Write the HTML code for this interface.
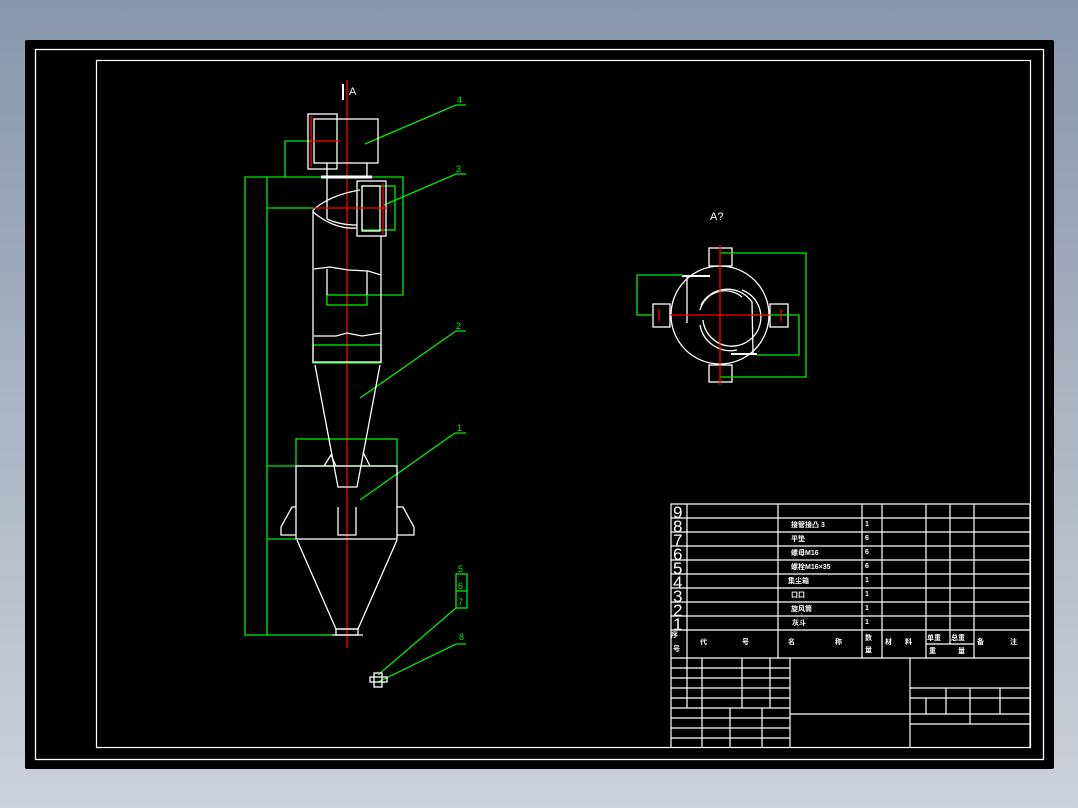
<!DOCTYPE html>
<html><head><meta charset="utf-8"><style>
html,body{margin:0;padding:0;width:1078px;height:808px;overflow:hidden;background:linear-gradient(#8797ac,#cdd1da);}
svg{position:absolute;left:0;top:0}
text{font-family:"Liberation Sans","Noto Sans CJK SC",sans-serif;}
</style></head><body>
<svg width="1078" height="808" viewBox="0 0 1078 808">
<rect x="25" y="40" width="1029" height="729" fill="#000" rx="2"/>
<rect x="35.5" y="49.5" width="1008" height="710" fill="none" stroke="#fff" stroke-width="1.3"/>
<rect x="96.5" y="60.5" width="934" height="687" fill="none" stroke="#fff" stroke-width="1.2"/>

<g fill="none" stroke-width="1.3">
<line x1="347" y1="80" x2="347" y2="648" stroke="#f00"/>
<g stroke="#0e0">
<polyline points="245,636 245,177 403,177 403,295 368,295"/>
<line x1="267" y1="177" x2="267" y2="636"/>
<polyline points="285,177 285,141 311,141"/>
<line x1="267" y1="208" x2="313" y2="208"/>
<rect x="362" y="186" width="33" height="44"/>
<rect x="327" y="295" width="40" height="10"/>
<rect x="313" y="345" width="68" height="18"/>
<rect x="296" y="439" width="101" height="27"/>
<line x1="267" y1="466" x2="296" y2="466"/>
<line x1="267" y1="539" x2="296" y2="539"/>
<line x1="245" y1="635" x2="332" y2="635"/>
<polyline points="365,144 456,105 466,105"/>
<polyline points="384,205 456,174 466,174"/>
<polyline points="360,398 456,331 466,331"/>
<polyline points="360,500 455,433 466,433"/>
<rect x="456" y="574" width="11" height="34"/>
<line x1="456" y1="591" x2="467" y2="591"/>
<polyline points="378,675 456,608"/>
<polyline points="378,682 456,644 466,644"/>
</g>
<g stroke="#fff">
<rect x="314" y="119" width="64" height="44"/>
<rect x="308" y="114" width="29" height="55"/>
<line x1="327" y1="163" x2="327" y2="177"/><line x1="367" y1="163" x2="367" y2="177"/>
<line x1="321" y1="177" x2="372" y2="177" stroke-width="3"/>
<polyline points="327,177 327,219"/>
<polyline points="313,210 313,362 381,362 381,236"/>
<path d="M313,210 Q330,195 360,190 M313,212 Q335,230 357,228 M327,219 Q340,225 357,225"/>
<rect x="357" y="181" width="29" height="55"/>
<rect x="362" y="186" width="18" height="45"/>
<path d="M314,269 L330,267 L348,270 L368,271 L381,275"/>
<line x1="327" y1="269" x2="327" y2="295"/><line x1="367" y1="271" x2="367" y2="295"/>
<path d="M314,336 L336,336 L347,333 L362,336 L381,333"/>
<polyline points="315,365 338,487 357,487 380,365"/>
<polyline points="324,466 331,455 336,466"/><polyline points="363,452 370,466"/>
<rect x="296" y="466" width="101" height="73"/>
<polyline points="296,507 292,507 281,527 281,535 296,535"/>
<polyline points="397,507 403,507 414,527 414,535 397,535"/>
<polyline points="338,507 338,535 356,535 356,507"/>
<polyline points="297,540 336,629 358,629 397,540"/>
<rect x="336" y="629" width="22" height="6"/>
<line x1="332" y1="635" x2="363" y2="635"/>
<rect x="370" y="677" width="17" height="5"/><rect x="374" y="673" width="8" height="14"/>
<line x1="343" y1="84" x2="343" y2="100" stroke-width="2"/>
</g>
<g stroke="#f00">
<line x1="313" y1="208" x2="388" y2="208"/>
<line x1="311" y1="141" x2="340" y2="141"/>
<line x1="311" y1="116" x2="311" y2="167"/>
<line x1="383" y1="183" x2="383" y2="234"/>
</g>
</g>
<g fill="#fff" font-size="11">
<text x="349" y="95">A</text>
</g>
<g fill="#0e0" font-size="9">
<text x="457" y="103">4</text><text x="456" y="172">3</text><text x="456" y="329">2</text><text x="457" y="431">1</text>
<text x="458" y="572">5</text><text x="458" y="589">6</text><text x="458" y="605">7</text><text x="459" y="640">8</text>
</g>

<g fill="none" stroke-width="1.3">
<g stroke="#fff">
<circle cx="720" cy="315" r="49"/>
<path d="M703,320 A29,29 0 1 0 742,290"/>
<path d="M700,325 A31,31 0 0 0 737,350"/>
<path d="M701,305 A30,30 0 0 1 752,302 L753,353"/>
<path d="M700,310 A26,26 0 0 1 742,297"/>
<line x1="682" y1="276" x2="710" y2="276" stroke-width="2"/>
<line x1="687" y1="276" x2="687" y2="323"/>
<line x1="731" y1="354" x2="757" y2="354" stroke-width="2"/>
<rect x="709" y="248" width="23" height="18"/>
<rect x="709" y="365" width="23" height="17"/>
<rect x="653" y="304" width="17" height="23"/>
<rect x="770" y="304" width="18" height="23"/>
</g>
<g stroke="#0e0">
<polyline points="683,275 637,275 637,315 653,315"/>
<polyline points="720,253 806,253 806,377 720,377"/>
<polyline points="753,315 799,315 799,355 757,355"/>
</g>
<g stroke="#f00">
<line x1="720" y1="245" x2="720" y2="385"/>
<line x1="670" y1="315" x2="770" y2="315"/>
<line x1="659" y1="309" x2="659" y2="321"/><line x1="781" y1="309" x2="781" y2="321"/>
</g>
</g>
<text x="710" y="220" fill="#fff" font-size="11">A?</text>

<g stroke="#fff" stroke-width="1.2" fill="none">
<polyline points="671,748 671,504 1030,504 1030,748"/>
<g>
<line x1="671" y1="518" x2="1030" y2="518"/><line x1="671" y1="532" x2="1030" y2="532"/>
<line x1="671" y1="546" x2="1030" y2="546"/><line x1="671" y1="560" x2="1030" y2="560"/>
<line x1="671" y1="574" x2="1030" y2="574"/><line x1="671" y1="588" x2="1030" y2="588"/>
<line x1="671" y1="602" x2="1030" y2="602"/><line x1="671" y1="616" x2="1030" y2="616"/>
<line x1="671" y1="630" x2="1030" y2="630"/><line x1="671" y1="658" x2="1030" y2="658"/>
<line x1="926" y1="644" x2="974" y2="644"/>
</g>
<g>
<line x1="687" y1="504" x2="687" y2="658"/><line x1="778" y1="504" x2="778" y2="658"/>
<line x1="862" y1="504" x2="862" y2="658"/><line x1="882" y1="504" x2="882" y2="658"/>
<line x1="926" y1="504" x2="926" y2="658"/><line x1="950" y1="504" x2="950" y2="644"/>
<line x1="974" y1="504" x2="974" y2="658"/>
</g>
<g>
<line x1="671" y1="668" x2="790" y2="668"/><line x1="671" y1="678" x2="790" y2="678"/>
<line x1="671" y1="688" x2="790" y2="688"/><line x1="671" y1="698" x2="790" y2="698"/>
<line x1="671" y1="708" x2="790" y2="708"/><line x1="671" y1="718" x2="790" y2="718"/>
<line x1="671" y1="728" x2="790" y2="728"/><line x1="671" y1="738" x2="790" y2="738"/>
<line x1="687" y1="658" x2="687" y2="708"/><line x1="702" y1="658" x2="702" y2="748"/>
<line x1="742" y1="658" x2="742" y2="708"/><line x1="770" y1="658" x2="770" y2="708"/>
<line x1="730" y1="708" x2="730" y2="748"/><line x1="762" y1="708" x2="762" y2="748"/>
<line x1="790" y1="658" x2="790" y2="748"/><line x1="910" y1="658" x2="910" y2="748"/>
<line x1="790" y1="714" x2="1030" y2="714"/>
<line x1="910" y1="688" x2="1030" y2="688"/><line x1="910" y1="698" x2="1030" y2="698"/>
<line x1="910" y1="724" x2="1030" y2="724"/>
<line x1="926" y1="698" x2="926" y2="714"/><line x1="946" y1="688" x2="946" y2="714"/>
<line x1="970" y1="688" x2="970" y2="724"/><line x1="1000" y1="688" x2="1000" y2="714"/>
</g>
</g>
<g fill="#fff" font-size="17" style="font-family:'Liberation Serif',serif">
<text x="673" y="518" transform="scale(1,1)">9</text>
<text x="673" y="532">8</text>
<text x="673" y="546">7</text>
<text x="673" y="560">6</text>
<text x="673" y="574">5</text>
<text x="673" y="588">4</text>
<text x="673" y="602">3</text>
<text x="673" y="616">2</text>
<text x="673" y="630">1</text>
</g>
<g fill="#fff" font-size="7" font-weight="bold">
<text x="791" y="527">接管接凸 3</text><text x="791" y="541">平垫</text>
<text x="791" y="555">螺母M16</text><text x="791" y="569">螺栓M16×35</text>
<text x="788" y="583">集尘箱</text><text x="791" y="597">口口</text>
<text x="791" y="611">旋风筒</text><text x="792" y="625">灰斗</text>
<text x="865" y="526">1</text><text x="865" y="540">6</text><text x="865" y="554">6</text>
<text x="865" y="568">6</text><text x="865" y="582">1</text><text x="865" y="596">1</text>
<text x="865" y="610">1</text><text x="865" y="624">1</text>
<text x="671" y="637">序</text><text x="673" y="651">号</text>
<text x="700" y="644">代</text><text x="742" y="644">号</text>
<text x="788" y="644">名</text><text x="835" y="644">称</text>
<text x="865" y="640">数</text><text x="865" y="652">量</text>
<text x="885" y="644">材</text><text x="905" y="644">料</text>
<text x="927" y="640">单重</text><text x="951" y="640">总重</text>
<text x="929" y="653">重</text><text x="958" y="653">量</text>
<text x="977" y="644">备</text><text x="1010" y="644">注</text>
</g>
</svg>
</body></html>
